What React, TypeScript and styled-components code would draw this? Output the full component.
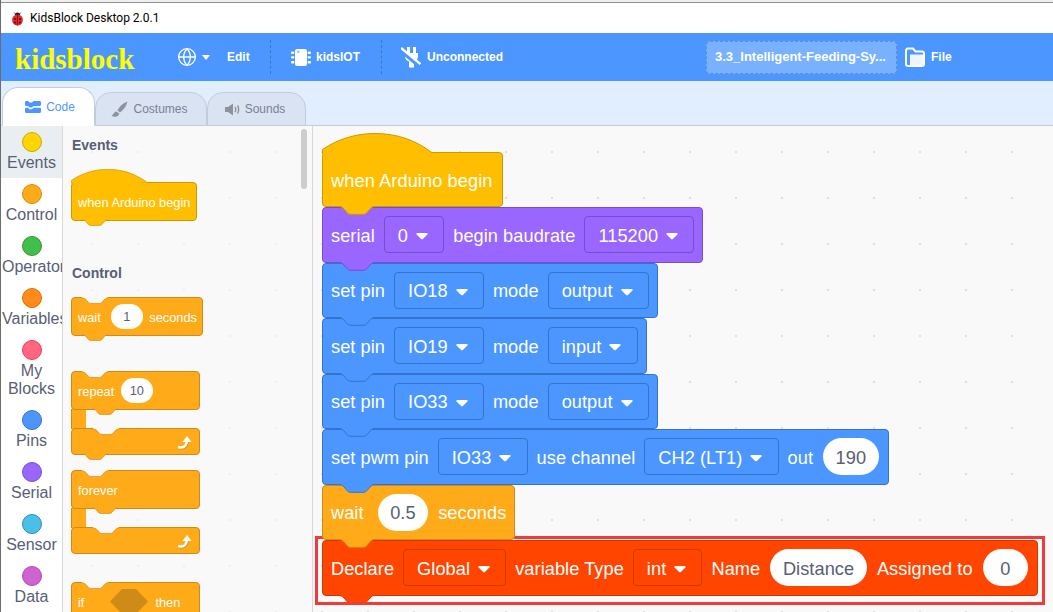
import React from "react";
import styled, { createGlobalStyle } from "styled-components";
import { Globe } from "lucide-react";

const GlobalStyle = createGlobalStyle`
  html, body {
    margin: 0;
    padding: 0;
    background: #fff;
  }
  * {
    box-sizing: border-box;
  }
`;

const SANS = `"Liberation Sans", Arial, sans-serif`;

type Tint = { fill: string; edge: string };

const YELLOW: Tint = { fill: "#ffbf00", edge: "#cc9900" };
const PURPLE: Tint = { fill: "#9966ff", edge: "#774dcb" };
const BLUE: Tint = { fill: "#4c97ff", edge: "#3373cc" };
const ORANGE: Tint = { fill: "#ffab19", edge: "#cf8b17" };
const RED: Tint = { fill: "#ff4500", edge: "#cc3a00" };

const CATEGORIES = [
  { label: "Events", fill: "#ffd500", edge: "#ccaa00", active: true },
  { label: "Control", fill: "#ffab19", edge: "#cf8b17" },
  { label: "Operators", fill: "#40bf4a", edge: "#389438" },
  { label: "Variables", fill: "#ff8c1a", edge: "#db6e00" },
  { label: "My Blocks", fill: "#ff6680", edge: "#ff3355" },
  { label: "Pins", fill: "#4c97ff", edge: "#3373cc" },
  { label: "Serial", fill: "#9966ff", edge: "#774dcb" },
  { label: "Sensor", fill: "#4cbfe6", edge: "#2e8eb8" },
  { label: "Data", fill: "#cf63cf", edge: "#bd42bd" },
];

const Page = styled.div`
  width: 1053px;
  height: 612px;
  overflow: hidden;
  display: flex;
  flex-direction: column;
  background: #fff;
  border-left: 1px solid #6d6d6d;
  font-family: ${SANS};
`;

const ScreenEdge = styled.div`
  height: 3px;
  flex: none;
  background: #f0f0f0;
  border-bottom: 1px solid #8f9499;
  margin-left: -1px;
`;

const TitleBar = styled.div`
  height: 30px;
  flex: none;
  display: flex;
  align-items: center;
  gap: 6px;
  padding-left: 10px;
  background: #fff;
  color: #000;
  font: 12px Roboto, sans-serif;
`;

const MenuBar = styled.div`
  height: 48px;
  flex: none;
  display: flex;
  align-items: center;
  background: #4c97ff;
  color: #fff;
  font-size: 12px;
  font-weight: 700;
`;

const Logo = styled.div`
  width: 176px;
  flex: none;
  padding-left: 14px;
  color: #ffff00;
  font: 700 29px "Liberation Serif", serif;
  margin-top: 4px;
`;

const MenuItem = styled.div<{ $width: number; $gap?: number; $pad?: number }>`
  width: ${(p) => p.$width}px;
  flex: none;
  display: flex;
  align-items: center;
  gap: ${(p) => p.$gap ?? 6}px;
  padding-left: ${(p) => p.$pad ?? 0}px;
`;

const MenuDivider = styled.div`
  width: 0;
  height: 34px;
  flex: none;
  border-left: 1px dashed rgba(0, 0, 0, 0.22);
`;

const Spacer = styled.div<{ $width: number }>`
  width: ${(p) => p.$width}px;
  flex: none;
`;

const ProjectTitle = styled.div`
  width: 191px;
  height: 33px;
  flex: none;
  display: flex;
  align-items: center;
  padding: 0 0 2px 8px;
  border: 1px dashed rgba(0, 0, 0, 0.2);
  border-radius: 4px;
  background: rgba(255, 255, 255, 0.25);
  font-size: 13px;
  font-weight: 700;
  white-space: nowrap;
`;

const TabRow = styled.div`
  height: 45px;
  flex: none;
  display: flex;
  align-items: flex-end;
  padding-left: 1px;
  background: #e1eeff;
  border-bottom: 1px solid #c3ccd9;
`;

const Tab = styled.div<{ $width: number; $active?: boolean; $shift: number }>`
  width: ${(p) => p.$width}px;
  height: ${(p) => (p.$active ? 39 : 34)}px;
  flex: none;
  position: relative;
  z-index: ${(p) => (p.$active ? 2 : 1)};
  display: flex;
  align-items: center;
  justify-content: center;
  gap: 5px;
  margin-bottom: -1px;
  padding: 0 ${(p) => (p.$shift < 0 ? -p.$shift : 0)}px 0 ${(p) => (p.$shift > 0 ? p.$shift : 0)}px;
  border: 1px solid #c3ccd9;
  border-bottom: ${(p) => (p.$active ? "1px solid #fff" : "1px solid #c3ccd9")};
  border-radius: 16px 16px 0 0;
  background: ${(p) => (p.$active ? "#fff" : "#d9e3f2")};
  color: ${(p) => (p.$active ? "#4c97ff" : "#7b8092")};
  font-size: 12px;
`;

const Body = styled.div`
  flex: 1;
  min-height: 0;
  display: flex;
`;

const CategoryColumn = styled.div`
  width: 62px;
  flex: none;
  background: #fff;
  border-right: 1px solid #d9d9d9;
`;

const Category = styled.div<{ $active?: boolean }>`
  padding: 6px 1px 6px;
  background: ${(p) => (p.$active ? "#e9eef2" : "transparent")};
  color: #575e75;
  font-size: 16px;
  line-height: 18px;
  text-align: center;
  overflow: hidden;
`;

const Dot = styled.div<{ $fill: string; $edge: string }>`
  width: 20px;
  height: 20px;
  margin: 0 auto 2px;
  border-radius: 50%;
  background: ${(p) => p.$fill};
  border: 1px solid ${(p) => p.$edge};
`;

const Palette = styled.div`
  width: 250px;
  flex: none;
  position: relative;
  overflow: hidden;
  padding: 10px 0 0 8px;
  background-color: #f9f9f9;
  background-image: radial-gradient(circle, #eeeff1 1px, transparent 1.5px);
  background-size: 46px 46px;
  background-position: 6px 3px;
  border-right: 1px solid #d4d7dc;
`;

const PaletteHeading = styled.div<{ $top?: number }>`
  height: 18px;
  margin: ${(p) => p.$top ?? 0}px 0 15px 1px;
  color: #575e75;
  font-size: 14px;
  font-weight: 700;
  line-height: 18px;
`;

const ScrollThumb = styled.div`
  position: absolute;
  left: 238px;
  top: 3px;
  width: 6px;
  height: 60px;
  border-radius: 3px;
  background: #cdcdcd;
`;

const Workspace = styled.div`
  flex: 1;
  min-width: 0;
  display: flex;
  flex-direction: column;
  align-items: flex-start;
  padding: 7px 0 0 9px;
  background-color: #f9f9f9;
  background-image: radial-gradient(circle, #dcdee3 1px, transparent 1.5px);
  background-size: 46px 46px;
  background-position: -14px 3px;
`;

const Block = styled.div<{
  $tint: Tint;
  $small?: boolean;
  $layer?: number;
  $height?: number;
  $width?: number;
  $gapAfter?: number;
  $spread?: number;
}>`
  position: relative;
  z-index: ${(p) => p.$layer ?? 1};
  display: flex;
  align-items: center;
  width: ${(p) => (p.$width ? `${p.$width}px` : "fit-content")};
  height: ${(p) => p.$height ?? (p.$small ? 39 : 55.5)}px;
  gap: ${(p) => (p.$small ? 6 : 9)}px;
  padding: ${(p) => (p.$small ? "2px 6px 0" : "3px 8px 0")};
  margin-bottom: ${(p) => p.$gapAfter ?? 0}px;
  background: ${(p) => p.$tint.fill};
  border: 1px solid ${(p) => p.$tint.edge};
  border-radius: 4px;
  color: #fff;
  font-size: ${(p) => (p.$small ? 12.8 : 18.2)}px;
  letter-spacing: ${(p) => p.$spread ?? (p.$small ? 0 : 0.06)}px;
  white-space: nowrap;
`;

const Dropdown = styled.div<{ $tint: Tint }>`
  height: 37px;
  display: flex;
  align-items: center;
  gap: 8px;
  margin-bottom: 3px;
  padding: 3px 15.2px 0 13px;
  background: ${(p) => p.$tint.fill};
  border: 1px solid ${(p) => p.$tint.edge};
  border-radius: 4px;
`;

const Pill = styled.div<{ $small?: boolean; $width: number; $nudge?: number }>`
  width: ${(p) => p.$width}px;
  height: ${(p) => (p.$small ? 25 : 37)}px;
  flex: none;
  display: flex;
  align-items: center;
  justify-content: center;
  margin: 0 ${(p) => (p.$small ? 0.5 : 1)}px ${(p) => (p.$small ? 2 : 3)}px ${(p) => p.$nudge ?? (p.$small ? 0.5 : 1)}px;
  padding-top: ${(p) => (p.$small ? 1 : 3)}px;
  background: #fff;
  border-radius: 19px;
  color: #575e75;
`;

const HatWrap = styled.div<{ $layer?: number; $gapAfter?: number }>`
  position: relative;
  z-index: ${(p) => p.$layer ?? 1};
  margin-bottom: ${(p) => p.$gapAfter ?? 0}px;
`;

const HatCap = styled.svg`
  display: block;
  position: relative;
  z-index: 2;
  margin-bottom: -2px;
`;

const EdgeShape = styled.svg<{ $left: number; $top?: boolean }>`
  position: absolute;
  left: ${(p) => p.$left}px;
  z-index: 2;
  ${(p) => (p.$top ? "top: -1px;" : "top: calc(100% - 1px);")}
`;

const ControlBlock = styled.div<{ $gapAfter?: number }>`
  position: relative;
  width: 129px;
  margin-bottom: ${(p) => p.$gapAfter ?? 0}px;
`;

const Spine = styled.div`
  width: 15px;
  height: 20px;
  margin: -1px 0;
  position: relative;
  background: ${ORANGE.fill};
  border-left: 1px solid ${ORANGE.edge};
`;

const LoopArrow = styled.svg`
  position: absolute;
  right: 7px;
  bottom: 4px;
`;

const HexSlot = styled.svg`
  margin: 0 1px 2px 20px;
  flex: none;
`;

const Highlight = styled.div`
  position: relative;
  z-index: 0;
  &::after {
    content: "";
    position: absolute;
    z-index: 3;
    inset: -4px -7px -9px -7px;
    border: 3px solid #f23a3a;
    pointer-events: none;
  }
`;

const TAB_SIZE = { width: 37, height: 10 };
const SMALL_SCALE = 0.694;

function BlockEdge({
  tint,
  left,
  small,
  top,
  fill,
}: {
  tint: Tint;
  left: number;
  small?: boolean;
  top?: boolean;
  fill?: string;
}) {
  const scale = small ? SMALL_SCALE : 1;
  return (
    <EdgeShape
      $left={left}
      $top={top}
      width={TAB_SIZE.width * scale}
      height={TAB_SIZE.height * scale}
      viewBox="0 0 37 10"
    >
      <path
        d="M0 0 H37 V1.5 C35 1.5 34 2 32 4 L29 7.5 C28 8.8 27 9.3 25 9.3 H13 C11 9.3 10 8.8 9 7.5 L6 4 C4 2 3 1.5 0 1.5 Z"
        fill={fill ?? tint.fill}
      />
      <path
        d="M37 1.5 C35 1.5 34 2 32 4 L29 7.5 C28 8.8 27 9.3 25 9.3 H13 C11 9.3 10 8.8 9 7.5 L6 4 C4 2 3 1.5 0 1.5"
        fill="none"
        stroke={tint.edge}
      />
    </EdgeShape>
  );
}

function Caret() {
  return (
    <svg width="12" height="8" viewBox="0 0 12 8">
      <path
        d="M1.2 1 H10.8 C11.6 1 11.9 1.8 11.4 2.4 L6.9 6.9 C6.4 7.4 5.6 7.4 5.1 6.9 L0.6 2.4 C0.1 1.8 0.4 1 1.2 1 Z"
        fill="#fff"
      />
    </svg>
  );
}

function Hat({
  small,
  layer,
  gapAfter,
  width,
}: {
  small?: boolean;
  layer?: number;
  gapAfter?: number;
  width?: number;
}) {
  const scale = small ? SMALL_SCALE : 1;
  return (
    <HatWrap $layer={layer} $gapAfter={gapAfter}>
      <HatCap width={111 * scale} height={21 * scale} viewBox="0 0 111 21">
        <path
          d="M0.5 21 V16.5 C16 6 34 0.5 53 0.5 C76 0.5 95 8 110.5 20"
          fill={YELLOW.fill}
          stroke={YELLOW.edge}
        />
      </HatCap>
      <Block
        $tint={YELLOW}
        $small={small}
        $width={width}
        $height={small ? 39 : 55}
        $spread={small ? 0 : 0.1}
      >
        when Arduino begin
        <BlockEdge tint={YELLOW} left={small ? 10 : 15} small={small} />
      </Block>
    </HatWrap>
  );
}

function Stack({
  tint,
  layer,
  children,
}: {
  tint: Tint;
  layer: number;
  children: React.ReactNode;
}) {
  return (
    <Block $tint={tint} $layer={layer}>
      {children}
      <BlockEdge tint={tint} left={15} />
    </Block>
  );
}

function Choice({ tint, children }: { tint: Tint; children: React.ReactNode }) {
  return (
    <Dropdown $tint={tint}>
      {children}
      <Caret />
    </Dropdown>
  );
}

function Loop({
  label,
  tailTab,
  gapAfter,
}: {
  label: React.ReactNode;
  tailTab?: boolean;
  gapAfter?: number;
}) {
  return (
    <ControlBlock $gapAfter={gapAfter}>
      <Block $tint={ORANGE} $small $width={129} $layer={2}>
        {label}
        <BlockEdge tint={ORANGE} left={10} small top fill="#f9f9f9" />
        <BlockEdge tint={ORANGE} left={20} small />
      </Block>
      <Spine />
      <Block $tint={ORANGE} $small $width={129} $height={27} $layer={1}>
        <BlockEdge tint={ORANGE} left={21} small top fill="#f9f9f9" />
        {tailTab && <BlockEdge tint={ORANGE} left={10} small />}
        <LoopArrow width="15" height="15" viewBox="0 0 15 15">
          <path d="M1 12.2 C6 13.8 9.6 12 10 7" fill="none" stroke="#cf8b17" strokeWidth="3.4" />
          <path d="M1 12 C6 13.4 9.4 11.6 9.8 6" fill="none" stroke="#fff" strokeWidth="2.6" />
          <path d="M5.5 7 L10 1 L14.5 7 Z" fill="#fff" />
        </LoopArrow>
      </Block>
    </ControlBlock>
  );
}

export default function App() {
  return (
    <Page>
      <GlobalStyle />
      <ScreenEdge />
      <TitleBar>
        <svg width="13" height="15" viewBox="0 0 13 15">
          <path d="M3 1.5 L5 3.5 M10 1.5 L8 3.5" stroke="#333" strokeWidth="0.8" />
          <circle cx="6.5" cy="4" r="2.6" fill="#222" />
          <ellipse cx="6.5" cy="9" rx="5.4" ry="5.6" fill="#e4262a" />
          <path d="M6.5 3.5 V14.5" stroke="#6b0d0f" strokeWidth="0.7" />
          <circle cx="4" cy="8" r="0.9" fill="#4a0b0b" />
          <circle cx="9" cy="8" r="0.9" fill="#4a0b0b" />
          <circle cx="4" cy="11.5" r="0.9" fill="#4a0b0b" />
          <circle cx="9" cy="11.5" r="0.9" fill="#4a0b0b" />
        </svg>
        KidsBlock Desktop 2.0.1
      </TitleBar>
      <MenuBar>
        <Logo>kidsblock</Logo>
        <MenuItem $width={93} $gap={5}>
          <Globe size={20} color="#fff" strokeWidth={1.6} />
          <svg width="8" height="5" viewBox="0 0 8 5">
            <path d="M0 0 H8 L4 5 Z" fill="#fff" />
          </svg>
          <Spacer $width={7} />
          Edit
        </MenuItem>
        <MenuDivider />
        <MenuItem $width={110} $pad={20} $gap={5}>
          <svg width="20" height="17" viewBox="0 0 20 17">
            <rect x="4" y="0" width="12" height="17" rx="2" fill="#fff" />
            <rect x="0" y="2.5" width="3.4" height="2.4" rx="1" fill="#fff" />
            <rect x="0" y="7.2" width="3.4" height="2.4" rx="1" fill="#fff" />
            <rect x="0" y="12" width="3.4" height="2.4" rx="1" fill="#fff" />
            <rect x="16.6" y="2.5" width="3.4" height="2.4" rx="1" fill="#fff" />
            <rect x="16.6" y="7.2" width="3.4" height="2.4" rx="1" fill="#fff" />
            <rect x="16.6" y="12" width="3.4" height="2.4" rx="1" fill="#fff" />
            <circle cx="7.3" cy="2.8" r="1.2" fill="#8dbcff" />
          </svg>
          kidsIOT
        </MenuItem>
        <MenuDivider />
        <MenuItem $width={324} $pad={19}>
          <svg width="20" height="21" viewBox="0 0 20 21">
            <path
              d="M6 0 H9 V6 H12 V0 H15 V6 H17 V9.5 C17 12 15 14 13 14.2 V20.5 H8 V14.2 C6 14 4 12 4 9.5 V6 H6 Z"
              fill="#fff"
            />
            <path d="M-1 2.5 L18 18.5" stroke="#4c97ff" strokeWidth="4.4" />
            <path d="M0 1 L19.5 17.2" stroke="#fff" strokeWidth="2.4" />
          </svg>
          Unconnected
        </MenuItem>
        <ProjectTitle>3.3_Intelligent-Feeding-Sy...</ProjectTitle>
        <MenuItem $width={60} $pad={8}>
          <svg width="20" height="20" viewBox="0 0 20 20">
            <path
              d="M1 4 C1 2.5 1.8 1.5 3 1.5 H8 L10.5 4.5 H17 C18.2 4.5 19 5.5 19 6.5 V17 C19 18 18.2 19 17 19 H3 C1.8 19 1 18 1 17 Z"
              fill="none"
              stroke="#fff"
              strokeWidth="2"
            />
            <path d="M5 7.5 H19 V17 C19 18 18 19 17 19 H5 Z" fill="#fff" opacity="0.9" />
          </svg>
          File
        </MenuItem>
      </MenuBar>
      <TabRow>
        <Tab $width={93} $active $shift={3}>
          <svg width="16" height="12" viewBox="0 0 16 12">
            <path
              d="M0 1.5 C0 .6 .6 0 1.5 0 H3 L4.5 1.5 H7 L8.5 0 H14.5 C15.4 0 16 .6 16 1.5 V3.5 C16 4.4 15.4 5 14.5 5 H8.5 L7 6.5 H4.5 L3 5 H1.5 C.6 5 0 4.4 0 3.5 Z"
              fill="#4c97ff"
            />
            <path
              d="M0 8 C0 7.2 .6 6.8 1.5 6.8 H3 L4.5 8.2 H7 L8.5 6.8 H14.5 C15.4 6.8 16 7.2 16 8 V10.5 C16 11.4 15.4 12 14.5 12 H1.5 C.6 12 0 11.4 0 10.5 Z"
              fill="#4c97ff"
            />
          </svg>
          Code
        </Tab>
        <Tab $width={112} $shift={-3}>
          <svg width="17" height="17" viewBox="0 0 17 17">
            <path d="M16.5 .5 C12 2 8.5 5.5 6.5 9.5 L9 11.5 C12.5 9 15.5 5 16.5 .5 Z" fill="#8f929d" />
            <path d="M5.5 10.5 C3 10.5 3 13.5 0.5 14.5 C3 16.5 7.5 16.5 8.3 12.8 Z" fill="#8f929d" />
          </svg>
          Costumes
        </Tab>
        <Tab $width={99} $shift={-3}>
          <svg width="15" height="13" viewBox="0 0 15 13">
            <path d="M0 4 H3 L8 0.5 V12.5 L3 9 H0 Z" fill="#8f929d" />
            <path d="M10 4 C11 5 11 8 10 9 M12.5 2.5 C14 4.5 14 8.5 12.5 10.5" stroke="#8f929d" strokeWidth="1.4" fill="none" />
          </svg>
          Sounds
        </Tab>
      </TabRow>
      <Body>
        <CategoryColumn>
          {CATEGORIES.map((c) => (
            <Category key={c.label} $active={c.active}>
              <Dot $fill={c.fill} $edge={c.edge} />
              {c.label}
            </Category>
          ))}
        </CategoryColumn>
        <Palette>
          <ScrollThumb />
          <PaletteHeading>Events</PaletteHeading>
          <Hat small width={126} />
          <PaletteHeading $top={43}>Control</PaletteHeading>
          <Block $tint={ORANGE} $small $width={132} $gapAfter={35}>
            wait
            <Pill $small $width={32} $nudge={4}>1</Pill>
            seconds
            <BlockEdge tint={ORANGE} left={10} small top fill="#f9f9f9" />
            <BlockEdge tint={ORANGE} left={10} small />
          </Block>
          <Loop
            tailTab
            gapAfter={15}
            label={
              <>
                repeat
                <Pill $small $width={32}>10</Pill>
              </>
            }
          />
          <Loop label="forever" gapAfter={28} />
          <Block $tint={ORANGE} $small $width={129}>
            if
            <HexSlot width="38" height="25" viewBox="0 0 38 25">
              <path d="M12 0 H26 L38 12.5 L26 25 H12 L0 12.5 Z" fill="#cf8b17" />
            </HexSlot>
            then
            <BlockEdge tint={ORANGE} left={10} small top fill="#f9f9f9" />
          </Block>
        </Palette>
        <Workspace>
          <Hat layer={9} width={181} />
          <Stack tint={PURPLE} layer={8}>
            serial
            <Choice tint={PURPLE}>0</Choice>
            begin baudrate
            <Choice tint={PURPLE}>115200</Choice>
          </Stack>
          <Stack tint={BLUE} layer={7}>
            set pin
            <Choice tint={BLUE}>IO18</Choice>
            mode
            <Choice tint={BLUE}>output</Choice>
          </Stack>
          <Stack tint={BLUE} layer={6}>
            set pin
            <Choice tint={BLUE}>IO19</Choice>
            mode
            <Choice tint={BLUE}>input</Choice>
          </Stack>
          <Stack tint={BLUE} layer={5}>
            set pin
            <Choice tint={BLUE}>IO33</Choice>
            mode
            <Choice tint={BLUE}>output</Choice>
          </Stack>
          <Stack tint={BLUE} layer={4}>
            set pwm pin
            <Choice tint={BLUE}>IO33</Choice>
            use channel
            <Choice tint={BLUE}>CH2 (LT1)</Choice>
            out
            <Pill $width={55.6}>190</Pill>
          </Stack>
          <Stack tint={ORANGE} layer={3}>
            wait
            <Pill $width={50.6} $nudge={5}>0.5</Pill>
            seconds
          </Stack>
          <Highlight>
            <Stack tint={RED} layer={2}>
              Declare
              <Choice tint={RED}>Global</Choice>
              variable Type
              <Choice tint={RED}>int</Choice>
              Name
              <Pill $width={96.7}>Distance</Pill>
              Assigned to
              <Pill $width={45.6}>0</Pill>
            </Stack>
          </Highlight>
        </Workspace>
      </Body>
    </Page>
  );
}
